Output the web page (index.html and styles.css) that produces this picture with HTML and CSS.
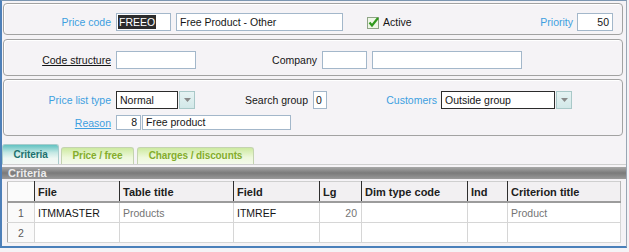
FILE: index.html
```html
<!DOCTYPE html>
<html lang="en">
<head>
    <meta charset="UTF-8">
    <title>Price code - FREEO</title>
    <link rel="stylesheet" href="styles.css">
</head>
<body>
    <div class="window">
        <!-- Header block: code, description, active flag, priority -->
        <div class="box box-code">
            <span class="label blue lead">Price code</span>
            <span class="field f-code"><span class="sel">FREEO</span></span>
            <span class="field f-desc">Free Product - Other</span>
            <span class="check">
                <svg width="13" height="13" viewBox="0 0 13 13">
                    <rect x="0.5" y="1.5" width="11" height="11" fill="#eef6e6" stroke="#8fa486"/>
                    <path d="M2.5 6.5 L5 9.5 L11 2" fill="none" stroke="#2f9a1c" stroke-width="2.2"/>
                </svg>
            </span>
            <span class="label active">Active</span>
            <span class="label blue priority">Priority</span>
            <span class="field f-prio num">50</span>
        </div>

        <!-- Code structure / company -->
        <div class="box box-struct">
            <span class="label lead link">Code structure</span>
            <span class="field f-struct"></span>
            <span class="label company">Company</span>
            <span class="field f-cpy"></span>
            <span class="field f-cpyname"></span>
        </div>

        <!-- Price list type, search group, customers, reason -->
        <div class="box box-type">
            <div class="row">
                <span class="label blue lead">Price list type</span>
                <span class="combo c-type"><span class="combo-text">Normal</span><span class="combo-btn"><svg width="7" height="4" viewBox="0 0 7 4"><path d="M0 0h7L3.5 4z" fill="#8a8a8a"/></svg></span></span>
                <span class="label search">Search group</span>
                <span class="field f-search">0</span>
                <span class="label blue customers">Customers</span>
                <span class="combo c-cust"><span class="combo-text">Outside group</span><span class="combo-btn"><svg width="7" height="4" viewBox="0 0 7 4"><path d="M0 0h7L3.5 4z" fill="#8a8a8a"/></svg></span></span>
            </div>
            <div class="row row-reason">
                <span class="label blue lead link">Reason</span>
                <span class="field small f-reason num">8</span>
                <span class="field small f-reasonname">Free product</span>
            </div>
        </div>

        <!-- Tabs -->
        <div class="tabs">
            <div class="tab tab-on">Criteria</div>
            <div class="tab tab-price">Price / free</div>
            <div class="tab tab-charges">Charges / discounts</div>
        </div>

        <div class="panel-title">Criteria</div>

        <table class="grid">
            <colgroup>
                <col style="width:27px">
                <col style="width:85px">
                <col style="width:114px">
                <col style="width:86px">
                <col style="width:42px">
                <col style="width:106px">
                <col style="width:40px">
                <col>
            </colgroup>
            <thead>
                <tr>
                    <th class="rn"></th>
                    <th>File</th>
                    <th>Table title</th>
                    <th>Field</th>
                    <th>Lg</th>
                    <th>Dim type code</th>
                    <th>Ind</th>
                    <th>Criterion title</th>
                </tr>
            </thead>
            <tbody>
                <tr>
                    <td class="rn">1</td>
                    <td>ITMMASTER</td>
                    <td class="dim">Products</td>
                    <td>ITMREF</td>
                    <td class="dim num">20</td>
                    <td></td>
                    <td></td>
                    <td class="dim">Product</td>
                </tr>
                <tr>
                    <td class="rn">2</td>
                    <td></td>
                    <td></td>
                    <td></td>
                    <td></td>
                    <td></td>
                    <td></td>
                    <td></td>
                </tr>
            </tbody>
        </table>
    </div>
</body>
</html>
```

FILE: styles.css
```css
/* Base */
body {
    margin: 0;
    background-color: #f5f3f6;
    font-family: "Liberation Sans", Arial, sans-serif;
    font-size: 10.5px;
    color: #151515;
}

/* Window frame */
.window {
    width: 624px;
    height: 245px;
    border-left: 2px solid #4d7fb8;
    border-top: 1px solid #7d97b2;
    border-right: 1px solid #98a6b4;
    border-bottom: 2px solid #4a80ba;
    overflow: hidden;
}

/* Rounded group boxes */
.box {
    display: flex;
    align-items: center;
    width: 618px;
    margin-left: 1px;
    border: 1px solid #a2a2a2;
    border-radius: 4px;
    box-shadow: inset 1px 1px 0 #ffffff;
}

.box-code {
    margin-top: 2px;
    padding: 9px 0 3px;
}

.box-struct {
    margin-top: 4px;
    padding: 11px 0 6px;
}

.box-type {
    display: block;
    margin-top: 3px;
    padding: 11px 0 5px;
}

.row {
    display: flex;
    align-items: center;
}

.row-reason {
    margin-top: 6px;
}

/* Labels */
.label {
    white-space: nowrap;
    line-height: 14px;
}

.blue {
    color: #3d9fe0;
}

.link {
    text-decoration: underline;
}

.lead {
    width: 107px;
    text-align: right;
}

.active {
    margin-left: 3px;
}

.priority {
    margin-left: auto;
}

.company {
    width: 121px;
    text-align: right;
}

.search {
    width: 113px;
    text-align: right;
}

.customers {
    width: 110px;
    text-align: right;
}

/* Entry fields */
.field {
    box-sizing: border-box;
    height: 18px;
    line-height: 16px;
    padding: 0 3px;
    background-color: #ffffff;
    border: 1px solid #a3b7ca;
    white-space: nowrap;
    overflow: hidden;
}

.field.small {
    height: 15px;
    line-height: 13px;
}

.num {
    text-align: right;
}

.f-code { width: 55px; margin-left: 5px; padding-left: 1px; }
.f-desc { width: 167px; margin-left: 5px; }
.f-prio { width: 36px; margin-left: 4px; margin-right: 9px; }
.f-struct { width: 80px; margin-left: 5px; }
.f-cpy { width: 45px; margin-left: 5px; }
.f-cpyname { width: 150px; margin-left: 5px; }
.f-search { width: 14px; margin-left: 5px; padding: 0 2px; }
.f-reason { width: 25px; margin-left: 5px; }
.f-reasonname { width: 149px; margin-left: 1px; }

.sel {
    display: inline-block;
    background-color: #2c2c2c;
    color: #ffffff;
    line-height: 14px;
    padding: 0 1px;
}

.check {
    display: flex;
    margin-left: 24px;
}

/* Combo boxes */
.combo {
    display: flex;
    margin-left: 5px;
}

.combo-text {
    box-sizing: border-box;
    height: 18px;
    line-height: 16px;
    padding: 0 3px;
    background-color: #ffffff;
    border: 1px solid #2b2b2b;
}

.combo-btn {
    box-sizing: border-box;
    display: flex;
    align-items: center;
    justify-content: center;
    width: 16px;
    height: 18px;
    margin-left: 1px;
    background: linear-gradient(#e6f3f3, #d2e8e8);
    border: 1px solid #a9c8c8;
}

.c-type .combo-text { width: 62px; }
.c-cust { margin-left: 4px; }
.c-cust .combo-text { width: 114px; }

/* Tabs */
.tabs {
    display: flex;
    align-items: flex-end;
    height: 20px;
    margin-top: 8px;
    border-bottom: 1px solid #cfcfcf;
    font-size: 10px;
    font-weight: bold;
    letter-spacing: -0.1px;
}

.tab {
    box-sizing: border-box;
    height: 17px;
    line-height: 16px;
    text-align: center;
    border: 1px solid #c4d3b0;
    border-bottom: none;
    border-radius: 3px 3px 0 0;
    background: linear-gradient(#cdeaa0, #eef8dc 60%, #f4faea);
    color: #84ad2c;
}

.tab-on {
    width: 57px;
    height: 20px;
    line-height: 20px;
    border-color: #a9cccc;
    background: linear-gradient(#62c2c2, #c4e8e4 40%, #eef7f3 70%, #f3f8f5);
    color: #1d716e;
}

.tab-price { width: 73px; margin-left: 2px; }
.tab-charges { width: 117px; margin-left: 3px; }

/* Grid title bar */
.panel-title {
    height: 12px;
    margin-top: 2px;
    padding-left: 6px;
    line-height: 12px;
    font-size: 11px;
    font-weight: bold;
    color: #ececec;
    background: linear-gradient(#a8a8a8, #7a7a7a 50%, #9a9a9a);
}

/* Criteria grid */
.grid {
    table-layout: fixed;
    width: 614px;
    margin: 2px 0 0 5px;
    border-collapse: collapse;
    border-left: 1px solid #a4a4a4;
    border-right: 1px solid #b6b6b6;
    border-top: 1px solid #cfcfcf;
}

.grid th {
    height: 19px;
    padding: 0 3px;
    text-align: left;
    font-size: 11px;
    color: #202020;
    background-color: #f2f0f2;
    border-right: 1px solid #2e2e2e;
    border-bottom: 2px solid #9c9c9c;
}

.grid th.rn {
    background-color: #fbfbfb;
}

.grid th:last-child {
    border-right: none;
}

.grid td {
    height: 19px;
    padding: 0 3px;
    white-space: nowrap;
    overflow: hidden;
    background-color: #ffffff;
    border-right: 1px solid #d6d6d6;
    border-bottom: 1px solid #d6d6d6;
}

.grid td.rn {
    text-align: center;
    color: #5a5a5a;
    background-color: #fafafa;
}

.grid td.dim {
    color: #747474;
}

.grid td.num {
    text-align: right;
    padding-right: 4px;
}
```
